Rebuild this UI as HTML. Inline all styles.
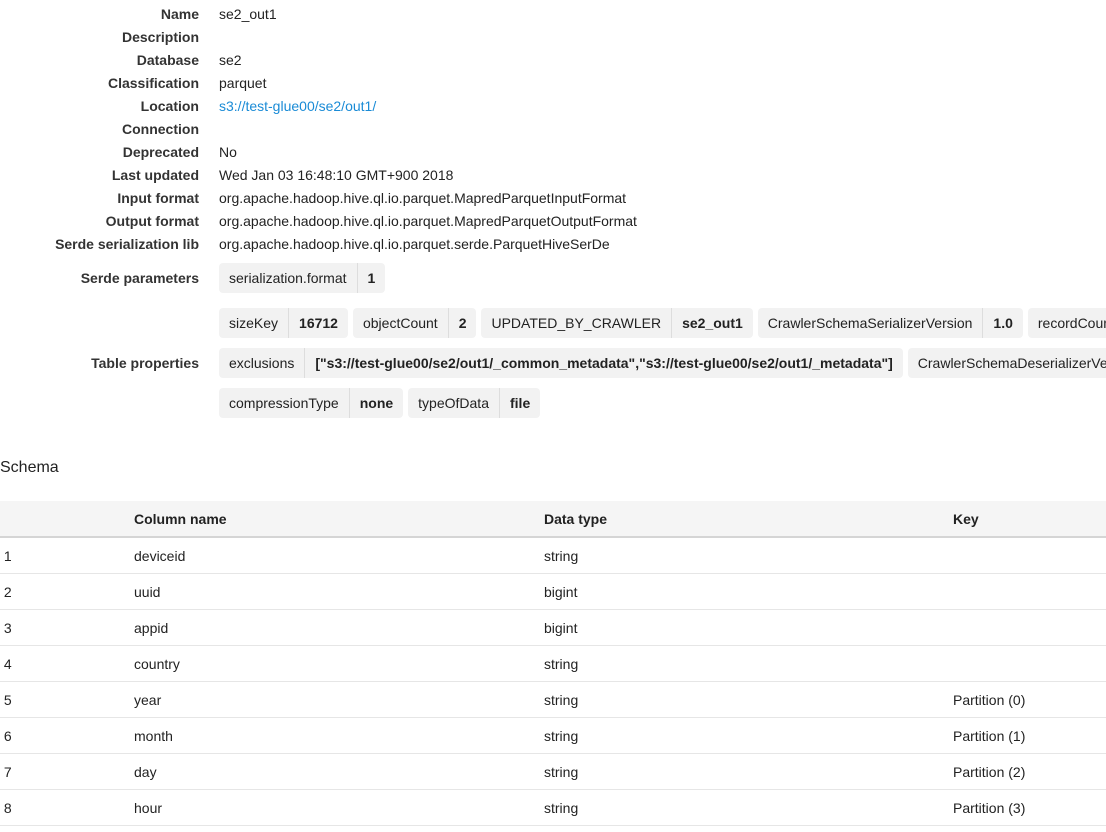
<!DOCTYPE html>
<html><head><meta charset="utf-8"><style>
body{margin:0;width:1106px;height:832px;overflow:hidden;background:#fff;font-family:"Liberation Sans",Arial,sans-serif;font-size:14px;color:#222;position:relative}
.r{position:absolute;left:0;width:1106px;height:23px;line-height:23px;white-space:nowrap}
.l{position:absolute;left:0;width:199px;text-align:right;font-weight:bold;color:#333}
.v{position:absolute;left:219px}
a{color:#1a8bd6;text-decoration:none}
.tags{position:absolute;left:219px;right:0;height:30px;white-space:nowrap;display:flex;gap:5px;overflow:hidden}
.t{display:inline-flex;flex:none;background:#f2f2f2;border-radius:4px;height:30px;line-height:30px}
.t span{padding:0 10px 0 10px}
.t span+span{border-left:1px solid #ddd;font-weight:bold}
.tl{position:absolute;left:0;width:199px;text-align:right;font-weight:bold;color:#333;line-height:30px}
h3{position:absolute;left:0;top:457px;margin:0;font-weight:normal;font-size:16px;line-height:22px}
table{position:absolute;left:0;top:501px;width:1106px;border-collapse:collapse}
th{background:#f5f5f5;height:35px;text-align:left;font-weight:bold;border-bottom:2px solid #d5d5d5;padding:0}
td{height:35px;border-bottom:1px solid #e6e6e6;padding:0}
</style></head><body>
<div class="r" style="top:3px"><div class="l">Name</div><div class="v">se2_out1</div></div>
<div class="r" style="top:26px"><div class="l">Description</div></div>
<div class="r" style="top:49px"><div class="l">Database</div><div class="v">se2</div></div>
<div class="r" style="top:72px"><div class="l">Classification</div><div class="v">parquet</div></div>
<div class="r" style="top:95px"><div class="l">Location</div><div class="v"><a>s3://test-glue00/se2/out1/</a></div></div>
<div class="r" style="top:118px"><div class="l">Connection</div></div>
<div class="r" style="top:141px"><div class="l">Deprecated</div><div class="v">No</div></div>
<div class="r" style="top:164px"><div class="l">Last updated</div><div class="v">Wed Jan 03 16:48:10 GMT+900 2018</div></div>
<div class="r" style="top:187px"><div class="l">Input format</div><div class="v">org.apache.hadoop.hive.ql.io.parquet.MapredParquetInputFormat</div></div>
<div class="r" style="top:210px"><div class="l">Output format</div><div class="v">org.apache.hadoop.hive.ql.io.parquet.MapredParquetOutputFormat</div></div>
<div class="r" style="top:233px"><div class="l">Serde serialization lib</div><div class="v">org.apache.hadoop.hive.ql.io.parquet.serde.ParquetHiveSerDe</div></div>

<div style="position:absolute;left:0;top:263px;width:1106px;height:30px"><div class="tl">Serde parameters</div></div>
<div class="tags" style="top:263px"><div class="t"><span>serialization.format</span><span>1</span></div></div>
<div class="tags" style="top:308px"><div class="t"><span>sizeKey</span><span>16712</span></div><div class="t"><span>objectCount</span><span>2</span></div><div class="t"><span>UPDATED_BY_CRAWLER</span><span>se2_out1</span></div><div class="t"><span>CrawlerSchemaSerializerVersion</span><span>1.0</span></div><div class="t"><span>recordCount</span><span>0</span></div></div>
<div style="position:absolute;left:0;top:348px;width:1106px;height:30px"><div class="tl">Table properties</div></div>
<div class="tags" style="top:348px"><div class="t"><span>exclusions</span><span>["s3://test-glue00/se2/out1/_common_metadata","s3://test-glue00/se2/out1/_metadata"]</span></div><div class="t"><span>CrawlerSchemaDeserializerVersion</span><span>1.0</span></div></div>
<div class="tags" style="top:388px"><div class="t"><span>compressionType</span><span>none</span></div><div class="t"><span>typeOfData</span><span>file</span></div></div>

<h3>Schema</h3>
<table>
<tr><th style="width:134px"></th><th style="width:410px">Column name</th><th style="width:409px">Data type</th><th>Key</th></tr>
<tr><td>&nbsp;1</td><td>deviceid</td><td>string</td><td></td></tr>
<tr><td>&nbsp;2</td><td>uuid</td><td>bigint</td><td></td></tr>
<tr><td>&nbsp;3</td><td>appid</td><td>bigint</td><td></td></tr>
<tr><td>&nbsp;4</td><td>country</td><td>string</td><td></td></tr>
<tr><td>&nbsp;5</td><td>year</td><td>string</td><td>Partition (0)</td></tr>
<tr><td>&nbsp;6</td><td>month</td><td>string</td><td>Partition (1)</td></tr>
<tr><td>&nbsp;7</td><td>day</td><td>string</td><td>Partition (2)</td></tr>
<tr><td>&nbsp;8</td><td>hour</td><td>string</td><td>Partition (3)</td></tr>
</table>
</body></html>
